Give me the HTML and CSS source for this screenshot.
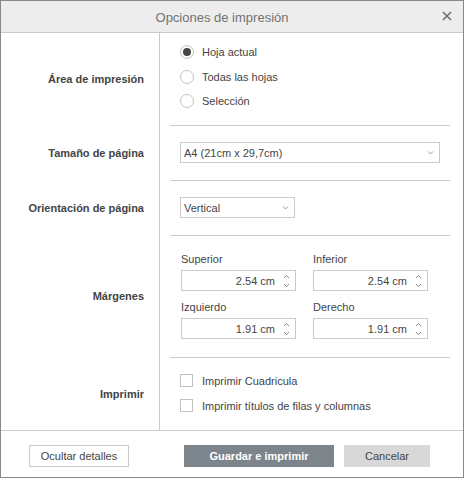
FILE: index.html
```html
<!DOCTYPE html>
<html lang="es">
<head>
<meta charset="utf-8">
<title>Opciones de impresión</title>
<link rel="stylesheet" href="styles.css">
</head>
<body>
<div class="dialog">
  <div class="header">
    <span class="title">Opciones de impresión</span>
    <svg class="close" width="10" height="10" viewBox="0 0 10 10"><path d="M1 1L9 9M9 1L1 9" stroke="#6f6f6f" stroke-width="1.6" fill="none"/></svg>
  </div>
  <div class="body">
    <div class="row row-area">
      <div class="label">Área de impresión</div>
      <div class="content">
        <div class="radios">
          <div class="radio-item"><span class="radio checked"></span><span>Hoja actual</span></div>
          <div class="radio-item"><span class="radio"></span><span>Todas las hojas</span></div>
          <div class="radio-item"><span class="radio"></span><span>Selección</span></div>
        </div>
      </div>
    </div>
    <div class="row row-select">
      <div class="label">Tamaño de página</div>
      <div class="content sep">
        <div class="select wide"><span>A4 (21cm x 29,7cm)</span><svg class="chev" width="7" height="4" viewBox="0 0 7 4"><path d="M1 0.5L3.5 3L6 0.5" stroke="#999" fill="none"/></svg></div>
      </div>
    </div>
    <div class="row row-select">
      <div class="label">Orientación de página</div>
      <div class="content sep">
        <div class="select narrow"><span>Vertical</span><svg class="chev" width="7" height="4" viewBox="0 0 7 4"><path d="M1 0.5L3.5 3L6 0.5" stroke="#999" fill="none"/></svg></div>
      </div>
    </div>
    <div class="row row-margins">
      <div class="label">Márgenes</div>
      <div class="content sep">
        <div class="margins">
          <div class="field"><div class="flabel">Superior</div><div class="spin"><span>2.54 cm</span><svg class="arrows" width="7" height="14" viewBox="0 0 7 14"><path d="M1 4L3.5 1.5L6 4M1 10L3.5 12.5L6 10" stroke="#888" fill="none"/></svg></div></div>
          <div class="field"><div class="flabel">Inferior</div><div class="spin"><span>2.54 cm</span><svg class="arrows" width="7" height="14" viewBox="0 0 7 14"><path d="M1 4L3.5 1.5L6 4M1 10L3.5 12.5L6 10" stroke="#888" fill="none"/></svg></div></div>
          <div class="field"><div class="flabel">Izquierdo</div><div class="spin"><span>1.91 cm</span><svg class="arrows" width="7" height="14" viewBox="0 0 7 14"><path d="M1 4L3.5 1.5L6 4M1 10L3.5 12.5L6 10" stroke="#888" fill="none"/></svg></div></div>
          <div class="field"><div class="flabel">Derecho</div><div class="spin"><span>1.91 cm</span><svg class="arrows" width="7" height="14" viewBox="0 0 7 14"><path d="M1 4L3.5 1.5L6 4M1 10L3.5 12.5L6 10" stroke="#888" fill="none"/></svg></div></div>
        </div>
      </div>
    </div>
    <div class="row row-print">
      <div class="label">Imprimir</div>
      <div class="content sep">
        <div class="checks">
          <div class="check-item"><span class="checkbox"></span><span>Imprimir Cuadricula</span></div>
          <div class="check-item"><span class="checkbox"></span><span>Imprimir títulos de filas y columnas</span></div>
        </div>
      </div>
    </div>
  </div>
  <div class="footer">
    <button class="btn btn-outline">Ocultar detalles</button>
    <button class="btn btn-primary">Guardar e imprimir</button>
    <button class="btn btn-gray">Cancelar</button>
  </div>
</div>
</body>
</html>
```
FILE: styles.css
```css
* { box-sizing: border-box; }
html, body { margin: 0; padding: 0; background: #fff; }
body {
  font-family: "Liberation Sans", Arial, sans-serif;
  font-size: 11px;
  color: #444;
}
.dialog {
  width: 464px;
  height: 478px;
  border: 1px solid #888;
  display: flex;
  flex-direction: column;
  background: #fff;
}
.header {
  height: 32px;
  flex: none;
  background: #ededed;
  border-bottom: 1px solid #cbcbcb;
  display: flex;
  align-items: center;
  justify-content: center;
  padding-right: 20px;
  position: relative;
}
.title {
  font-size: 13px;
  color: #727272;
  margin-top: 1px;
}
.close {
  position: absolute;
  right: 11px;
  top: 10px;
}
.body {
  flex: none;
  height: 397px;
  display: flex;
  flex-direction: column;
}
.row {
  display: flex;
}
.label {
  width: 159px;
  flex: none;
  border-right: 1px solid #cbcbcb;
  display: flex;
  align-items: center;
  justify-content: flex-end;
  padding-right: 15px;
  font-weight: bold;
  color: #444;
}
.content {
  flex: 1;
  margin: 0 13px 0 10px;
}
.content.sep {
  border-top: 1px solid #cbcbcb;
}
.row-area { height: 92px; }
.row-select { height: 55px; }
.row-margins { height: 122px; }
.row-print { height: 73px; }

.radios {
  padding: 7px 0 0 10px;
  display: flex;
  flex-direction: column;
}
.radio-item {
  height: 24.5px;
  display: flex;
  align-items: center;
}
.radio {
  width: 14px;
  height: 14px;
  border: 1px solid #c2c2c2;
  border-radius: 50%;
  margin-right: 8px;
  display: flex;
  align-items: center;
  justify-content: center;
  flex: none;
}
.radio.checked::after {
  content: "";
  width: 8px;
  height: 8px;
  border-radius: 50%;
  background: #444;
}
.select {
  margin: 16px 0 0 10px;
  height: 21px;
  border: 1px solid #cbcbcb;
  display: flex;
  align-items: center;
  justify-content: space-between;
  padding: 0 5px 0 3px;
}
.select.wide { width: 260px; }
.select.narrow { width: 115px; }
.chev { margin-top: 1px; }

.margins {
  padding: 16px 0 0 11px;
  display: grid;
  grid-template-columns: 115px 115px;
  column-gap: 17px;
  row-gap: 9px;
}
.flabel {
  height: 18px;
  line-height: 14px;
}
.spin {
  height: 21px;
  border: 1px solid #cbcbcb;
  display: flex;
  align-items: center;
  justify-content: flex-end;
  padding-right: 5px;
}
.spin span { margin-right: 8px; }

.checks {
  padding: 10px 0 0 10px;
  display: flex;
  flex-direction: column;
}
.check-item {
  height: 25px;
  display: flex;
  align-items: center;
}
.checkbox {
  width: 13px;
  height: 13px;
  border: 1px solid #c2c2c2;
  margin-right: 9px;
  flex: none;
}

.footer {
  flex: 1;
  border-top: 1px solid #cbcbcb;
  display: flex;
  align-items: center;
  padding: 4px 0 0 28px;
}
.btn {
  height: 22px;
  font-family: "Liberation Sans", Arial, sans-serif;
  font-size: 11px;
  border: none;
  padding: 0;
  margin: 0;
}
.btn-outline {
  width: 100px;
  background: #fff;
  border: 1px solid #cbcbcb;
  color: #444;
}
.btn-primary {
  width: 150px;
  margin-left: 55px;
  background: #7d858c;
  color: #fff;
  font-weight: bold;
}
.btn-gray {
  width: 86px;
  margin-left: 10px;
  background: #d8d8d8;
  color: #444;
}
```
